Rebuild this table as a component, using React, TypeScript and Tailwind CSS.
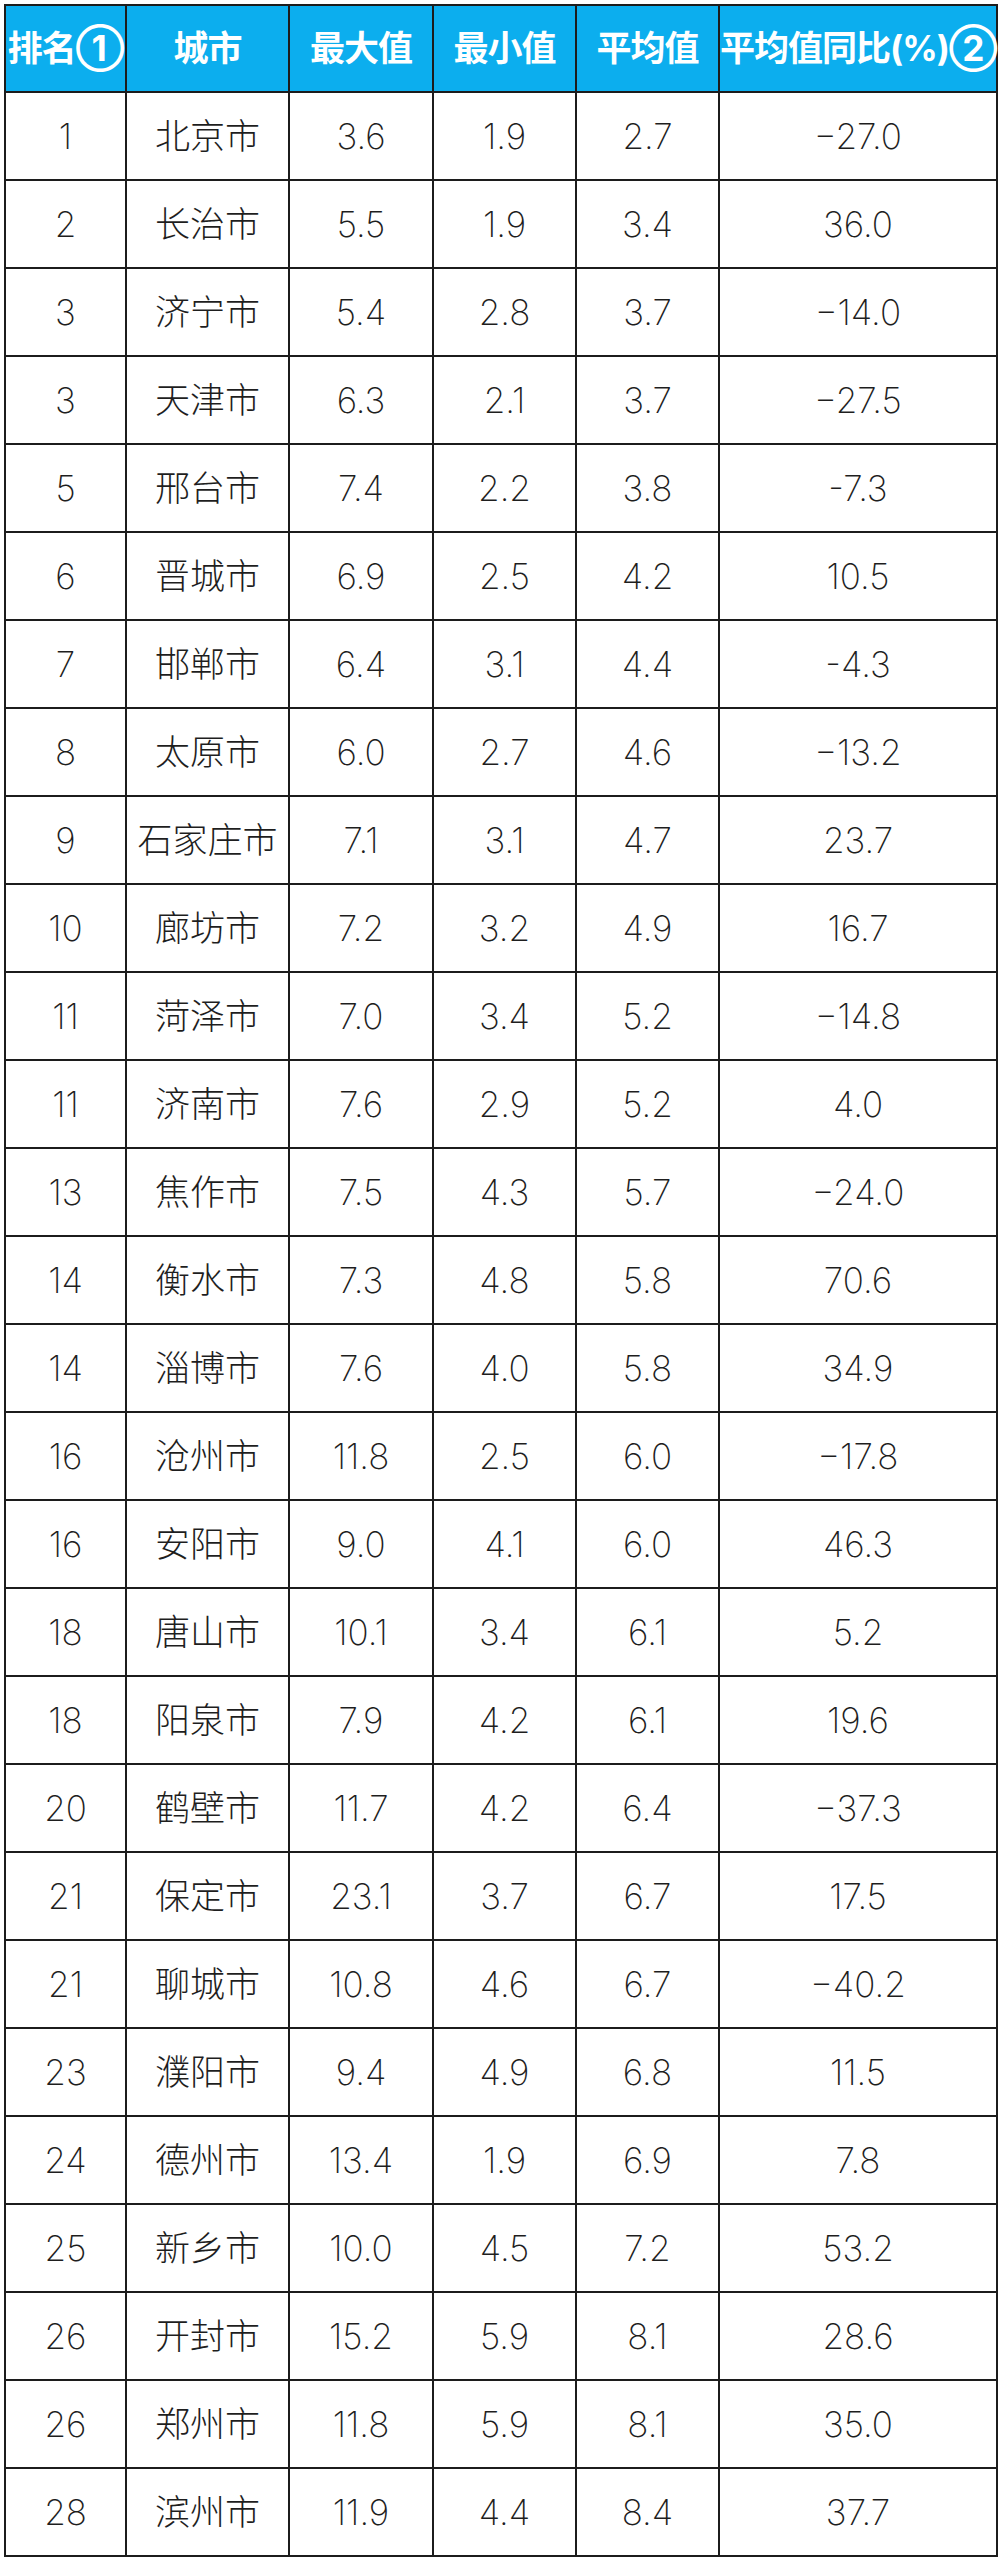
const headers = ["排名①", "城市", "最大值", "最小值", "平均值", "平均值同比(%)②"];

const rows: [string, string, string, string, string, string][] = [
  ["1", "北京市", "3.6", "1.9", "2.7", "−27.0"],
  ["2", "长治市", "5.5", "1.9", "3.4", "36.0"],
  ["3", "济宁市", "5.4", "2.8", "3.7", "−14.0"],
  ["3", "天津市", "6.3", "2.1", "3.7", "−27.5"],
  ["5", "邢台市", "7.4", "2.2", "3.8", "-7.3"],
  ["6", "晋城市", "6.9", "2.5", "4.2", "10.5"],
  ["7", "邯郸市", "6.4", "3.1", "4.4", "-4.3"],
  ["8", "太原市", "6.0", "2.7", "4.6", "−13.2"],
  ["9", "石家庄市", "7.1", "3.1", "4.7", "23.7"],
  ["10", "廊坊市", "7.2", "3.2", "4.9", "16.7"],
  ["11", "菏泽市", "7.0", "3.4", "5.2", "−14.8"],
  ["11", "济南市", "7.6", "2.9", "5.2", "4.0"],
  ["13", "焦作市", "7.5", "4.3", "5.7", "−24.0"],
  ["14", "衡水市", "7.3", "4.8", "5.8", "70.6"],
  ["14", "淄博市", "7.6", "4.0", "5.8", "34.9"],
  ["16", "沧州市", "11.8", "2.5", "6.0", "−17.8"],
  ["16", "安阳市", "9.0", "4.1", "6.0", "46.3"],
  ["18", "唐山市", "10.1", "3.4", "6.1", "5.2"],
  ["18", "阳泉市", "7.9", "4.2", "6.1", "19.6"],
  ["20", "鹤壁市", "11.7", "4.2", "6.4", "−37.3"],
  ["21", "保定市", "23.1", "3.7", "6.7", "17.5"],
  ["21", "聊城市", "10.8", "4.6", "6.7", "−40.2"],
  ["23", "濮阳市", "9.4", "4.9", "6.8", "11.5"],
  ["24", "德州市", "13.4", "1.9", "6.9", "7.8"],
  ["25", "新乡市", "10.0", "4.5", "7.2", "53.2"],
  ["26", "开封市", "15.2", "5.9", "8.1", "28.6"],
  ["26", "郑州市", "11.8", "5.9", "8.1", "35.0"],
  ["28", "滨州市", "11.9", "4.4", "8.4", "37.7"],
];

const widths = ["w-[121px]", "w-[163px]", "w-[144px]", "w-[143px]", "w-[143px]", "w-[278px]"];

export default function App() {
  return (
    <div className="bg-white w-[1000px] min-h-[2560px] pt-[4px] pl-[4px]">
      <table
        className="border-collapse table-fixed w-[994px] text-[#1e1e1e]"
        style={{ fontFamily: 'Inter, "Noto Sans CJK SC", sans-serif' }}
      >
        <colgroup>
          {widths.map((w, i) => (
            <col key={i} className={w} />
          ))}
        </colgroup>
        <thead>
          <tr className="h-[87px] bg-[#0caeee]">
            {headers.map((h) => (
              <th
                key={h}
                className="border-2 border-[#1c1c1c] text-white font-bold text-[35px] tracking-[-1px] whitespace-nowrap p-0 text-center"
              >
                {h}
              </th>
            ))}
          </tr>
        </thead>
        <tbody>
          {rows.map((r, i) => (
            <tr key={i} className="h-[88px]">
              {r.map((c, j) => (
                <td
                  key={j}
                  className="border-2 border-[#1c1c1c] text-center font-extralight text-[35px] whitespace-nowrap p-0"
                >
                  {c}
                </td>
              ))}
            </tr>
          ))}
        </tbody>
      </table>
    </div>
  );
}
